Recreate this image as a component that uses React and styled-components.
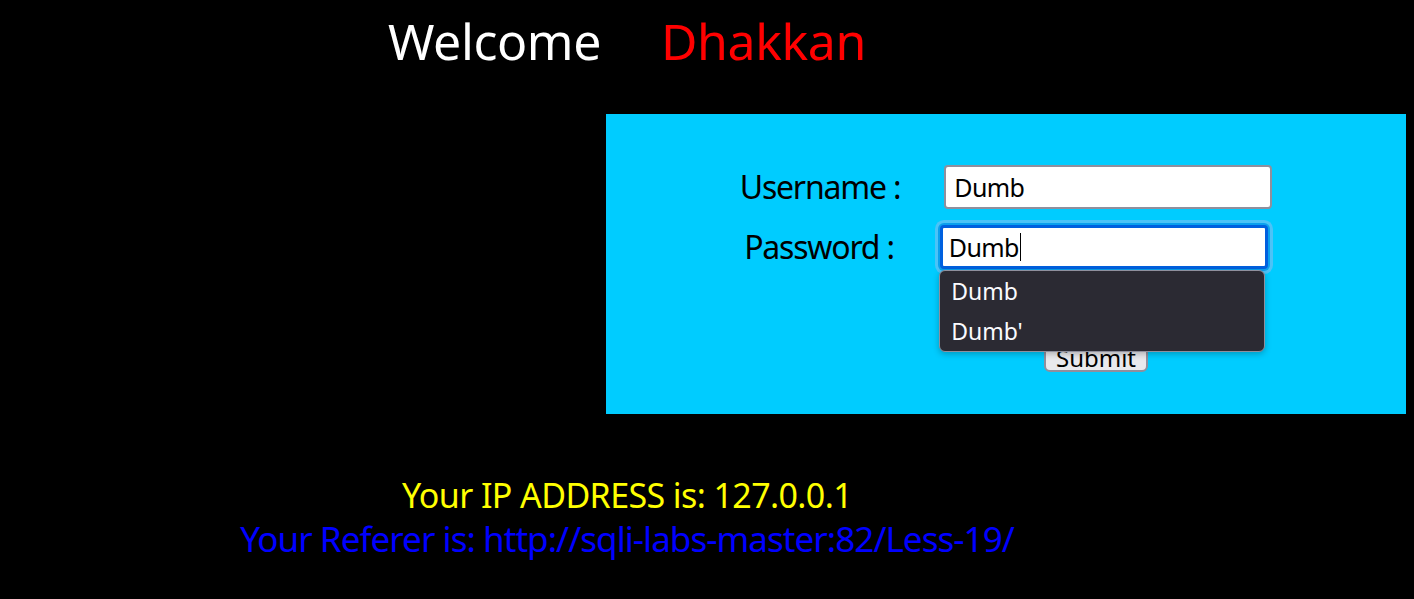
import React from "react";
import styled, { createGlobalStyle } from "styled-components";

const Global = createGlobalStyle`
  html, body { margin: 0; padding: 0; background: #000; }
  body { font-family: "Noto Sans", "Open Sans", sans-serif; }
`;

const Page = styled.div`
  width: 1414px;
  height: 599px;
  overflow: hidden;
  background: #000;
`;

const Header = styled.div`
  width: 1254px;
  padding-top: 16px;
  display: flex;
  justify-content: center;
  gap: 60px;
  font-size: 50px;
  line-height: 51px;
  letter-spacing: -0.4px;
`;

const Word = styled.span`
  color: ${(p) => p.$color};
`;

const Panel = styled.div`
  margin-top: 47px;
  margin-left: 606px;
  width: 800px;
  height: 300px;
  background: #00ccff;
  box-sizing: border-box;
  padding-top: 51px;
  display: flex;
  flex-direction: column;
  align-items: center;
`;

const Row = styled.div`
  position: relative;
  display: flex;
  align-items: center;
  gap: ${(p) => p.$gap}px;
  margin-top: ${(p) => p.$top || 0}px;
`;

const Label = styled.span`
  color: #000;
  font-size: 32px;
  letter-spacing: -1.2px;
  line-height: 44px;
`;

const Field = styled.div`
  width: 328px;
  height: 44px;
  box-sizing: border-box;
  background: #fff;
  border: ${(p) => (p.$focus ? "3px solid #0060df" : "2px solid #8f8f9d")};
  border-radius: 4px;
  box-shadow: ${(p) =>
    p.$focus ? "0 0 0 2px #0aa0ee, 0 0 0 5px #4cc3f7" : "none"};
  display: flex;
  align-items: center;
  padding-left: ${(p) => (p.$focus ? 6 : 8)}px;
  font-size: 25px;
  letter-spacing: -0.6px;
  color: #000;
`;

const Caret = styled.span`
  display: inline-block;
  width: 1.5px;
  height: 28px;
  background: #000;
  margin-left: 1px;
`;

const Dropdown = styled.div`
  position: absolute;
  left: ${(p) => p.$left}px;
  top: 45px;
  width: 326px;
  box-sizing: border-box;
  background: #2b2a33;
  border: 1px solid #8f8f9d;
  border-radius: 6px;
  box-shadow: 0 2px 6px rgba(0, 0, 0, 0.25);
  z-index: 2;
`;

const Option = styled.div`
  height: 40px;
  line-height: 40px;
  padding-left: 11px;
  color: #fbfbfe;
  font-size: 23px;
`;

const SubmitRow = styled.div`
  margin-top: 71px;
  display: flex;
  justify-content: center;
`;

const Button = styled.button`
  margin-left: 180px;
  width: 104px;
  height: 32px;
  background: #e9e9ed;
  border: 2px solid #8f8f9d;
  border-radius: 6px;
  font-family: inherit;
  font-size: 24px;
  line-height: 22px;
  padding: 4px 0 0;
  color: #000;
`;

const Footer = styled.div`
  width: 1254px;
  margin-top: 60px;
  display: flex;
  flex-direction: column;
  align-items: center;
`;

const Line = styled.div`
  color: ${(p) => p.$color};
  font-size: ${(p) => p.$size}px;
  line-height: ${(p) => p.$lh}px;
  letter-spacing: ${(p) => p.$ls}px;
  white-space: nowrap;
`;

export default function App() {
  return (
    <Page>
      <Global />
      <Header>
        <Word $color="#ffffff">Welcome</Word>
        <Word $color="#ff0000">Dhakkan</Word>
      </Header>
      <Panel>
        <Row $gap={44}>
          <Label>Username :</Label>
          <Field>Dumb</Field>
        </Row>
        <Row $gap={46} $top={16}>
          <Label>Password :</Label>
          <Field $focus>
            Dumb
            <Caret />
          </Field>
          <Dropdown $left={195}>
            <Option>Dumb</Option>
            <Option>Dumb'</Option>
          </Dropdown>
        </Row>
        <SubmitRow>
          <Button>Submit</Button>
        </SubmitRow>
      </Panel>
      <Footer>
        <Line $color="#ffff00" $size={34} $lh={43} $ls={-0.6}>
          Your IP ADDRESS is: 127.0.0.1
        </Line>
        <Line $color="#0000ff" $size={35} $lh={43} $ls={-0.95}>
          Your Referer is: http://sqli-labs-master:82/Less-19/
        </Line>
      </Footer>
    </Page>
  );
}
